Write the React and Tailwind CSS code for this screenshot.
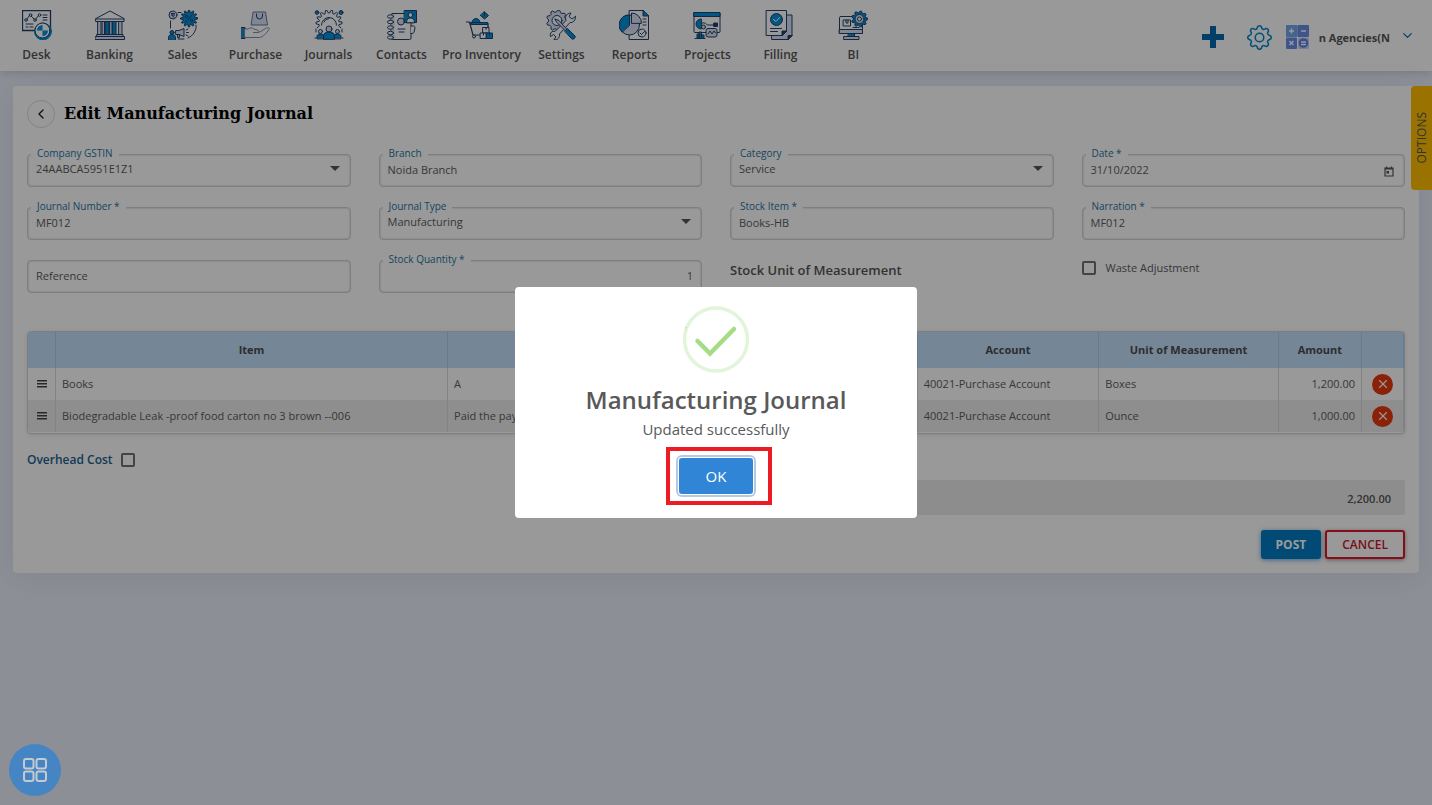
import React, { useState } from 'react';
import { ChevronLeft, ChevronDown, X } from 'lucide-react';
import { BsGear } from 'react-icons/bs';

const NAVY = '#22406b';
const BLUE = '#0092dc';
const PALE = '#d9dff5';

const Icon = ({ children }) => (
  <svg width="30" height="30" viewBox="0 0 30 30" fill="none" stroke={NAVY} strokeWidth="1" strokeLinejoin="round" strokeLinecap="round" aria-hidden="true">
    {children}
  </svg>
);

const Gear = ({ cx, cy, r, teeth = 10, fill = 'none', depth = 2 }) => {
  const pts = [];
  for (let i = 0; i < teeth * 4; i++) {
    const a = ((i - 0.5) / (teeth * 4)) * Math.PI * 2;
    const rad = i % 4 < 2 ? r : r - depth;
    pts.push(`${(cx + rad * Math.cos(a)).toFixed(2)},${(cy + rad * Math.sin(a)).toFixed(2)}`);
  }
  return <polygon points={pts.join(' ')} fill={fill} />;
};

const DeskIcon = () => (
  <Icon>
    <rect x="0.5" y="0.5" width="28" height="20" fill="#fff" strokeWidth="1.3" />
    <path d="M4 10l4-5 5 5 4-5" />
    <g fill="#fff">
      <circle cx="4" cy="10" r="1.3" />
      <circle cx="8.5" cy="5" r="1.3" />
      <circle cx="13" cy="10" r="1.3" />
      <circle cx="17.5" cy="5" r="1.3" />
    </g>
    <path d="M21 5h4M21 7.500h4M21 10h4M4 14h7M4 17h2M8 17h3" />
    <circle cx="21" cy="21.500" r="8.500" fill={BLUE} stroke={BLUE} />
    <circle cx="20.500" cy="20.500" r="7.500" fill="#fff" />
    <path d="M20.500 20.500V15a5.500 5.500 0 0 0-5.500 5.500zM20.500 20.500V26a5.500 5.500 0 0 0 5.500-5.500z" fill={BLUE} stroke="none" />
  </Icon>
);

const BankingIcon = () => (
  <Icon>
    <path d="M1 8.500L15 1l14 7.500v3H1z" fill="#fff" />
    <path d="M1 9h28" />
    <g fill={PALE}>
      <rect x="3" y="11.500" width="3" height="13" />
      <rect x="7.500" y="11.500" width="2" height="13" />
      <rect x="15" y="11.500" width="2" height="13" />
      <rect x="24" y="11.500" width="3" height="13" />
    </g>
    <rect x="11" y="11.500" width="3" height="13" fill={BLUE} />
    <rect x="18" y="11.500" width="3" height="13" fill={BLUE} />
    <path d="M2 24.500h26v2H2zM0.500 26.500h29v3H0.500z" fill={PALE} />
  </Icon>
);

const SalesIcon = () => (
  <Icon>
    <circle cx="5" cy="5" r="4" fill={PALE} />
    <path d="M3.500 3.500h3M3.500 5h3M4 5l2 2.500M10 2.500h3M2.500 11v7M28 15c1 5-3 11-8 13M10 29h6" />
    <Gear cx={21} cy={8.500} r={8.500} teeth={12} fill={BLUE} depth={2.500} />
    <path d="M24 5l-6 7" />
    <circle cx="18.500" cy="6.500" r="1.200" />
    <circle cx="23.500" cy="10.500" r="1.200" />
    <circle cx="4" cy="22.500" r="2" fill={BLUE} />
    <path d="M0.500 29.500v-2c0-2 1.500-3 3.500-3s3.500 1 3.500 3v2z" fill={BLUE} />
    <path d="M8 20.500h3l5-2v8l-5-2H8zM9.500 24.500v3h2v-3" fill={PALE} />
    <path d="M18 20l2-1M18.500 22.500h2M18 25l2 1" />
  </Icon>
);

const PurchaseIcon = () => (
  <Icon>
    <path d="M12.500 2h12l2 13h-16z" fill={PALE} stroke="#6377a5" />
    <path d="M15.500 4v2a3 3 0 0 0 6 0V4" />
    <rect x="0.500" y="17.500" width="3.500" height="11" fill={BLUE} />
    <path d="M4 19h3c2-1.500 4-1.500 6 0l3 1c2 .5 2 2.500 0 2.500h-4 5c3-.5 5-3 8.500-4.500 2-.8 3.500 0 2.500 1.500-2.500 3.500-6 7.500-9.500 8H4z" fill="#fff" stroke="#8090ad" />
  </Icon>
);

const JournalsIcon = () => (
  <Icon>
    <Gear cx={15} cy={13} r={13} teeth={14} depth={3} fill="#fff" />
    <path d="M7.500 15a7.500 7.500 0 1 1 15 0" />
    <path d="M10 12a5.500 5.500 0 0 1 5-3.500" />
    <circle cx="3" cy="2.500" r="1.800" fill={BLUE} />
    <circle cx="27" cy="2.500" r="2" fill={BLUE} />
    <path d="M1 30V18h28v12z" fill="#fff" stroke="none" />
    <path d="M2 19v3M28 19v3M1 28h1M28 28h1" />
    <circle cx="6.500" cy="21.500" r="2" fill={PALE} />
    <circle cx="23.500" cy="21.500" r="2" fill={PALE} />
    <path d="M3 28.500v-2c0-2 1.500-2.500 3.500-2.500s3 .5 3.500 2.500v2zM20 28.500v-2c0-2 1.500-2.500 3.500-2.500s3.500 .5 3.500 2.500v2z" fill={BLUE} />
    <circle cx="15" cy="19" r="3" fill={PALE} />
    <path d="M9.500 29v-3c0-3 2.500-4 5.500-4s5.500 1 5.500 4v3z" fill={BLUE} />
  </Icon>
);

const ContactsIcon = () => (
  <Icon>
    <rect x="4" y="3.500" width="20" height="26" rx="1.500" fill="#fff" />
    <path d="M4.500 4h3v25h-3z" fill={PALE} stroke="none" />
    <path d="M24 16h2.500c1 0 1.500 1 1.500 2l-1 4c0 1-1 1.500-3 1.500" fill="#fff" />
    <circle cx="14" cy="11.500" r="3.500" fill={PALE} />
    <path d="M11 19h7M12 22h5" />
    <rect x="17.500" y="0.500" width="12" height="12" fill={BLUE} />
    <circle cx="23.500" cy="5" r="2.300" fill="#fff" />
    <path d="M19.500 12.500c0-3 1.500-4.500 4-4.500s4 1.500 4 4.500z" fill="#fff" />
    <g fill="#fff">
      <ellipse cx="3.500" cy="6.500" rx="3" ry="1.700" />
      <ellipse cx="3.500" cy="12" rx="3" ry="1.700" />
      <ellipse cx="3.500" cy="17.500" rx="3" ry="1.700" />
      <ellipse cx="3.500" cy="23" rx="3" ry="1.700" />
      <ellipse cx="3.500" cy="27.500" rx="3" ry="1.700" />
    </g>
  </Icon>
);

const InventoryIcon = () => (
  <Icon>
    <path d="M18.500 2l4 3.500-4 3.500-4-3.500z" fill={BLUE} />
    <path d="M18.500 2v4" />
    <path d="M6 13c0-3 2-4.500 4-4.500s4 1.500 4 4.500z" fill={BLUE} />
    <path d="M0.500 12h3l3.500 13h7" strokeWidth="1.200" />
    <path d="M4.500 13.500H22M22 13.500v4" strokeWidth="1.300" />
    <path d="M5 12.500h16.500v2H5.500z" fill={BLUE} />
    <circle cx="8" cy="26.500" r="1.500" fill="#fff" />
    <rect x="17" y="17.500" width="6" height="5.500" fill="#fff" />
    <rect x="14.500" y="23" width="6" height="5.500" fill="#fff" />
    <rect x="20.500" y="23" width="6" height="5.500" fill={BLUE} />
    <path d="M20 17.500v2M17.500 23v2M23.500 23v2" />
  </Icon>
);

const SettingsIcon = () => (
  <Icon>
    <Gear cx={11} cy={10.500} r={10.500} teeth={9} fill={PALE} depth={2} />
    <circle cx="11" cy="10.500" r="5" fill="#fff" />
    <path d="M29.500 6.500l-3.500 2.500-3-2.500 2-3.500c-4 0-6.500 3.500-5 7.500L9 21.500c-3-1-5.500 1.500-4.500 5l3-2 2.500 2.500-2 2.500c4 1 6-2.500 5.500-5.500L24 12.500c3 .5 6-2.500 5.500-6z" fill="#fff" />
    <path d="M9 9l4 1.500 8 9-1.500 1.500-8.500-8.500z" fill={PALE} />
    <path d="M19 21l2.500-2.500 7.500 7.500c1 1.500-1.500 4-3 3z" fill={BLUE} />
  </Icon>
);

const ReportsIcon = () => (
  <Icon>
    <path d="M10.500 0.500H24l5.500 5.500v23.500H10.500z" fill="#fff" />
    <path d="M24 0.500V6h5.500z" fill={BLUE} />
    <path d="M24 9h3M24 12h3M24 15h3" />
    <circle cx="10.500" cy="15" r="10" fill={PALE} />
    <path d="M10.500 15V5a10 10 0 0 0-7.500 17z" fill={BLUE} />
    <path d="M12.500 13V3a10 10 0 0 1 10 10z" fill={PALE} />
    <circle cx="23" cy="23" r="4" fill="#fff" />
    <path d="M21 23l1.500 1.500 3-3" />
  </Icon>
);

const ProjectsIcon = () => (
  <Icon>
    <rect x="2" y="2.500" width="26" height="20" rx="1" fill="#fff" />
    <rect x="2" y="2.500" width="26" height="4" fill={BLUE} />
    <path d="M9 9a5 5 0 0 0 0 10z" fill={BLUE} />
    <circle cx="11.500" cy="17" r="2" fill={PALE} />
    <path d="M10 13c4-1 4 2 6 2h6" />
    <rect x="22" y="13" width="3.500" height="3.500" fill={NAVY} />
    <rect x="14" y="18.500" width="11" height="8.500" rx="2" fill={PALE} />
    <path d="M16 24l2-3 2 3 2-3 1.500 2" />
    <path d="M5 28v-4h2v4M7 28v-6h2.500v6M9.500 28v-3H12v3" fill={BLUE} />
    <path d="M3 28.500h10" />
  </Icon>
);

const FillingIcon = () => (
  <Icon>
    <path d="M7 5h20v20.500L23 29.500H7z" fill={PALE} />
    <path d="M27 25.500h-4v4z" fill={NAVY} />
    <path d="M1.500 0.500h20v20.500L17 25.500H1.500z" fill="#fff" />
    <path d="M21.500 21H17v4.500z" fill={NAVY} />
    <circle cx="11.500" cy="9.500" r="6" fill={BLUE} />
    <path d="M8.500 9.500l2.500 2 3.500-4" stroke="#fff" />
    <path d="M5.500 18.500h11M5.500 21.500h7" />
  </Icon>
);

const BiIcon = () => (
  <Icon>
    <rect x="1.500" y="6.500" width="23" height="17" rx="1" fill="#fff" />
    <path d="M1.500 19.500h23v4h-23z" fill={PALE} />
    <rect x="5.500" y="10" width="7" height="6" />
    <path d="M8 10v3h2v-3M15 17.500h6" />
    <path d="M10.500 23.500h6v3h-6z" fill={BLUE} />
    <rect x="6" y="26.500" width="15" height="3" fill={PALE} />
    <Gear cx={21.500} cy={9} r={8} teeth={9} fill={BLUE} depth={1.700} />
    <circle cx="21.500" cy="9" r="4.500" fill={PALE} />
    <circle cx="21.500" cy="9" r="2" fill="#fff" />
  </Icon>
);

const navLinks = [
  { name: 'Desk', icon: <DeskIcon /> },
  { name: 'Banking', icon: <BankingIcon /> },
  { name: 'Sales', icon: <SalesIcon /> },
  { name: 'Purchase', icon: <PurchaseIcon /> },
  { name: 'Journals', icon: <JournalsIcon /> },
  { name: 'Contacts', icon: <ContactsIcon /> },
  { name: 'Pro Inventory', icon: <InventoryIcon /> },
  { name: 'Settings', icon: <SettingsIcon /> },
  { name: 'Reports', icon: <ReportsIcon /> },
  { name: 'Projects', icon: <ProjectsIcon /> },
  { name: 'Filling', icon: <FillingIcon /> },
  { name: 'BI', icon: <BiIcon /> },
];

const rows = [
  { item: 'Books', description: 'A', account: '40021-Purchase Account', unit: 'Boxes', amount: '1,200.00' },
  { item: 'Biodegradable Leak -proof food carton no 3 brown --006', description: 'Paid the payment', account: '40021-Purchase Account', unit: 'Ounce', amount: '1,000.00' },
];

const Navbar = () => (
  <header className="flex h-[71px] items-center justify-between bg-white shadow-[0_2px_8px_rgba(60,70,100,0.2)]">
    <nav className="flex pt-[3px]">
      {navLinks.map((link) => (
        <a key={link.name} href="#" className="flex min-w-[73px] flex-col items-center gap-[6px] px-1 text-[12px] font-semibold leading-[18px] text-[#555]">
          {link.icon}
          <span className="whitespace-nowrap">{link.name}</span>
        </a>
      ))}
    </nav>

    {/* Right Section */}
    <div className="flex items-center pr-[17px] pt-[3px]">
      <button type="button" aria-label="Add new" className="mr-[22px]">
        <svg width="24" height="24" viewBox="0 0 24 24" fill="#0069ad">
          <path d="M9.500 1h5a.5.5 0 0 1 .5.5V9h7.500a.5.5 0 0 1 .5.5v5a.5.5 0 0 1-.5.500H15v7.500a.5.5 0 0 1-.5.500h-5a.5.5 0 0 1-.5-.5V15H1.500a.5.5 0 0 1-.5-.5v-5A.5.5 0 0 1 1.500 9H9V1.500A.5.5 0 0 1 9.500 1z" />
        </svg>
      </button>
      <button type="button" aria-label="Preferences" className="mr-[14px]">
        <BsGear size={25} className="text-[#0088c8]" />
      </button>
      <button type="button" aria-label="Calculator" className="mr-[10px]">
        <svg width="23" height="24" viewBox="0 0 23 24" stroke="#fff" strokeWidth="1.500" fill="none">
          <rect x="0" y="0" width="11.500" height="12" rx="1" fill="#74a6ee" stroke="none" />
          <rect x="11.500" y="0" width="11.500" height="12" rx="1" fill="#6a8de6" stroke="none" />
          <rect x="0" y="12.500" width="11" height="11.500" rx="1" fill="#6a8de6" stroke="none" />
          <rect x="12" y="12.500" width="11" height="11.500" rx="1" fill="#c5d3f8" stroke="none" />
          <circle cx="17.500" cy="18" r="4.800" fill="#5f83e0" stroke="none" />
          <path d="M3 6h5M5.500 3.500v5M15 6h5M3.500 16l4 4M7.500 16l-4 4M15 17h5M15 19.500h5" />
        </svg>
      </button>
      <button type="button" className="flex items-center pt-[2px] text-[11px] font-bold text-[#555]">
        <span className="whitespace-nowrap">n Agencies(N</span>
        <ChevronDown size={15} className="mb-[6px] ml-[10px] text-[#0069ad]" />
      </button>
    </div>
  </header>
);

const boxClass = 'h-[33px] w-full appearance-none rounded-[4px] border border-[#d2d2d2] bg-white px-2 pb-[3px] text-[11px] text-[#5c5c5c] shadow-[inset_0_0_2px_#bbb] outline-none placeholder:text-[#5c5c5c] placeholder:opacity-100';

const Field = ({ id, label, value, options, icon, align = 'text-left', placeholder }) => (
  <div className="relative">
    {options ? (
      <select id={id} defaultValue={value} className={`${boxClass} ${align}`}>
        {options.map((o) => <option key={o}>{o}</option>)}
      </select>
    ) : (
      <input id={id} type="text" defaultValue={value} placeholder={placeholder} aria-label={placeholder} className={`${boxClass} ${align}`} />
    )}
    {label && (
      <label htmlFor={id} className="absolute -top-2 left-1 bg-white px-[6px] text-[10px] leading-[14px] text-[#26749f]">
        {label}
      </label>
    )}
    {options && (
      <svg width="10" height="5" viewBox="0 0 10 5" className="pointer-events-none absolute right-[11px] top-3 fill-[#555]">
        <path d="M0 0h10L5 5z" />
      </svg>
    )}
    {icon && <span className="pointer-events-none absolute right-[11px] top-3">{icon}</span>}
  </div>
);

const CalendarIcon = () => (
  <svg width="10" height="11" viewBox="0 0 10 11" fill="none" stroke="#555" strokeWidth="1.200">
    <path d="M1 2h8v8H1zM1 3h8M2.500 0.500V2M7.500 0.500V2" />
    <rect x="2.500" y="5" width="2.500" height="2.500" fill="#555" stroke="none" />
  </svg>
);

const checkClass = 'h-[14px] w-[14px] appearance-none rounded-[2px] border-2 border-[#707070] bg-white checked:bg-[#707070]';

const ItemsTable = () => (
  <div className="mt-[38px] rounded-[4px] border border-[#d4d4d4] pb-px shadow-[0_1px_4px_rgba(0,0,0,0.12)]">
    <table className="w-full table-fixed border-collapse text-[11px] text-[#5c5c5c]">
      <colgroup>
        <col className="w-[2%]" />
        <col className="w-[28.5%]" />
        <col className="w-[34.15%]" />
        <col className="w-[13.2%]" />
        <col className="w-[13.05%]" />
        <col className="w-[6.05%]" />
        <col />
      </colgroup>
      <thead>
        <tr className="h-9 bg-[#c3e0fb] font-bold text-[#4c4c4c] [&>th]:border-r [&>th]:border-[#a9cdf0]">
          <th aria-label="Reorder" />
          <th>Item</th>
          <th aria-label="Description" />
          <th>Account</th>
          <th>Unit of Measurement</th>
          <th>Amount</th>
          <th aria-label="Delete" />
        </tr>
      </thead>
      <tbody>
        {rows.map((row) => (
          <tr key={row.item} className="h-8 even:bg-[#ededed] [&>td]:border-r [&>td]:border-[#dadada] [&>td]:px-[6px]">
            <td>
              <svg width="10" height="8" viewBox="0 0 10 8" className="mx-auto fill-[#444]">
                <path d="M0 0h10v1.500H0zM0 3h10v1.500H0zM0 6h10v1.500H0z" />
              </svg>
            </td>
            <td>{row.item}</td>
            <td>{row.description}</td>
            <td>{row.account}</td>
            <td>{row.unit}</td>
            <td className="text-right">{row.amount}</td>
            <td>
              <button type="button" aria-label={`Delete ${row.item}`} className="mx-auto flex h-[21px] w-[21px] items-center justify-center rounded-full bg-[#e8380d] text-white">
                <X size={14} />
              </button>
            </td>
          </tr>
        ))}
      </tbody>
    </table>
  </div>
);

const JournalForm = () => (
  <main className="mx-[13px] mt-[15px] rounded-[4px] bg-white p-[14px] shadow-[0_4px_30px_rgba(80,100,160,0.12)]">
    <div className="flex h-7 items-center gap-[9px]">
      <button type="button" aria-label="Back" className="flex h-7 w-7 items-center justify-center rounded-full border border-[#dcdcdc] text-[#222]">
        <ChevronLeft size={16} />
      </button>
      <h1 className="font-['DejaVu_Serif',serif] text-[16px] font-bold text-black">Edit Manufacturing Journal</h1>
    </div>

    <form className="mt-[26px] grid grid-cols-4 gap-x-7 gap-y-5">
      <Field id="gstin" label="Company GSTIN" value="24AABCA5951E1Z1" options={['24AABCA5951E1Z1']} />
      <Field id="branch" label="Branch" value="Noida Branch" />
      <Field id="category" label="Category" value="Service" options={['Service', 'Goods']} />
      <Field id="date" label="Date *" value="31/10/2022" icon={<CalendarIcon />} />
      <Field id="number" label="Journal Number *" value="MF012" />
      <Field id="type" label="Journal Type" value="Manufacturing" options={['Manufacturing']} />
      <Field id="stock" label="Stock Item *" value="Books-HB" />
      <Field id="narration" label="Narration *" value="MF012" />
      <Field id="reference" placeholder="Reference" />
      <Field id="quantity" label="Stock Quantity *" value="1" align="text-right" />
      <p className="text-[13px] font-semibold leading-5 text-[#555]">Stock Unit of Measurement</p>
      <div className="flex h-4 items-center gap-[10px]">
        <input id="waste" type="checkbox" className={checkClass} />
        <label htmlFor="waste" className="text-[11px] text-[#5c5c5c]">Waste Adjustment</label>
      </div>
    </form>

    <ItemsTable />

    <div className="mt-[18px] flex h-4 items-center gap-2">
      <label htmlFor="overhead" className="text-[12px] font-semibold text-[#22638f]">Overhead Cost</label>
      <input id="overhead" type="checkbox" className={checkClass} />
    </div>

    <div className="ml-auto mt-3 flex h-[35px] w-[49%] items-center justify-end rounded-[2px] bg-[#ebebeb] px-[14px] pt-1 text-[11px] font-semibold text-[#555]">
      2,200.00
    </div>

    <div className="mt-[15px] flex justify-end gap-1">
      <button type="button" className="h-[29px] rounded-[3px] bg-[#007cc4] px-[15px] text-[12px] font-bold text-white shadow-[0_1px_5px_rgba(0,110,190,0.6)]">POST</button>
      <button type="button" className="h-[29px] rounded-[3px] border-2 border-[#e0142c] bg-white px-[15px] text-[12px] font-semibold text-[#d3142c] shadow-[0_1px_4px_rgba(0,0,0,0.4)]">CANCEL</button>
    </div>
  </main>
);

const SuccessDialog = ({ onClose }) => (
  <div className="fixed inset-0 z-20 flex items-center justify-center bg-black/40">
    <div role="dialog" aria-labelledby="dialog-title" className="flex w-[402px] flex-col items-center rounded-[4px] bg-white pb-6 pt-[19px] text-[#595959]">
      <svg width="66" height="67" viewBox="0 0 66 67" fill="none">
        <circle cx="33" cy="33.500" r="31.500" stroke="#e3f4da" strokeWidth="3.500" />
        <path d="M14.500 35l12.500 12.500L51 23" stroke="#a5dc86" strokeWidth="4.500" strokeLinecap="round" />
        <path d="M2.500 22.500l1-1.500" stroke="#a5dc86" />
      </svg>
      <h2 id="dialog-title" className="mt-[11px] text-[24px] font-semibold leading-8">Manufacturing Journal</h2>
      <p className="mt-[2px] text-[15px] leading-[22px]">Updated successfully</p>
      <div className="relative mt-[18px]">
        <button
          type="button"
          onClick={onClose}
          className="h-9 w-[74px] rounded-[3px] bg-[#3085d6] text-[15px] font-medium text-white shadow-[0_0_0_1px_#fff,0_0_0_3px_#b5c9e2]"
        >
          OK
        </button>
        <span className="pointer-events-none absolute -bottom-[11px] -left-[13px] -right-[19px] -top-[11px] border-4 border-[#ed1c24]" />
      </div>
    </div>
  </div>
);

export default function App() {
  const [open, setOpen] = useState(true);

  return (
    <div className="min-h-screen bg-[#ebeffa] font-['Open_Sans',sans-serif]">
      <Navbar />
      <JournalForm />

      <button type="button" className="fixed right-0 top-[86px] z-10 flex h-[104px] w-[21px] items-center justify-center rounded-l-[4px] bg-[#ffbf00] text-[12px] text-[#555]">
        <span className="rotate-180 [writing-mode:vertical-rl]">OPTIONS</span>
      </button>

      {open && <SuccessDialog onClose={() => setOpen(false)} />}

      <button type="button" aria-label="Apps" className="fixed bottom-[9px] left-[9px] z-30 flex h-[52px] w-[52px] items-center justify-center rounded-full bg-[#4585c3]">
        <svg width="24" height="24" viewBox="0 0 24 24" fill="none" stroke="#c3cad2" strokeWidth="2">
          <rect x="1" y="1" width="9.500" height="9.500" rx="2" />
          <rect x="13.500" y="1" width="9.500" height="9.500" rx="2" />
          <rect x="1" y="13.500" width="9.500" height="9.500" rx="2" />
          <rect x="13.500" y="13.500" width="9.500" height="9.500" rx="2" />
        </svg>
      </button>
    </div>
  );
}
